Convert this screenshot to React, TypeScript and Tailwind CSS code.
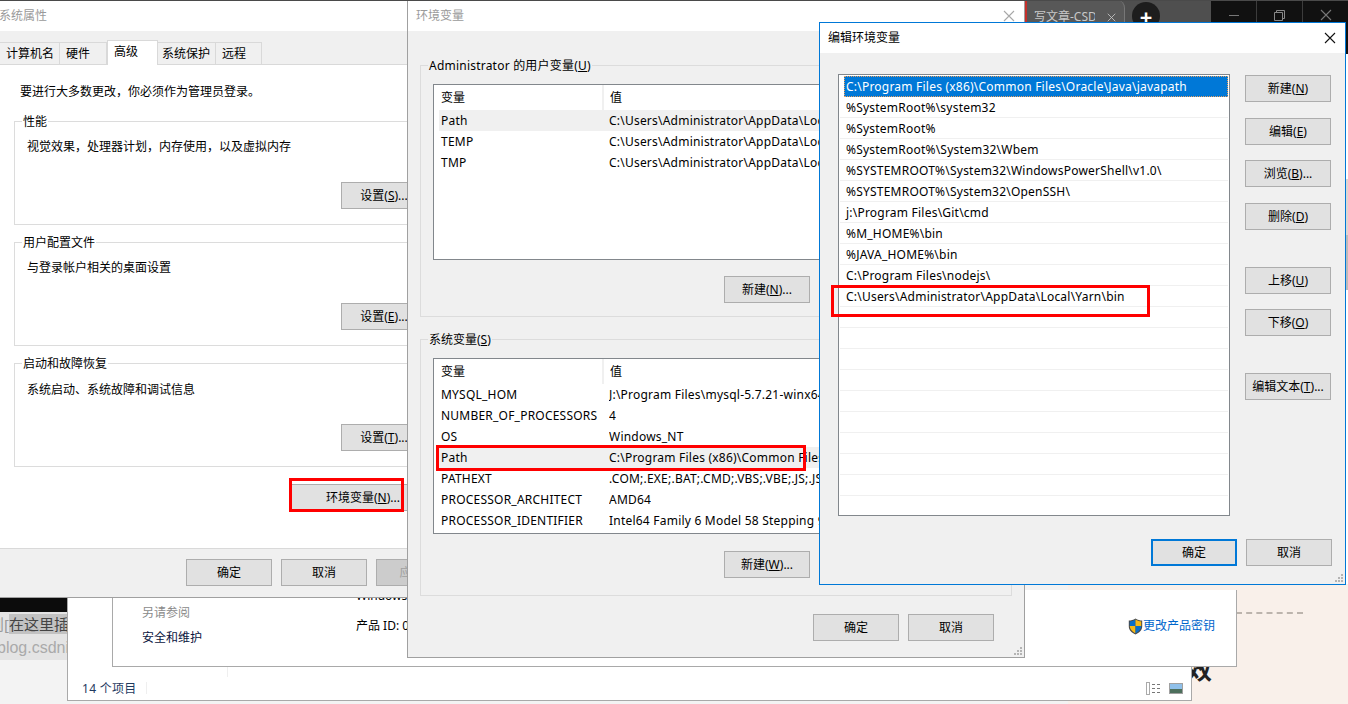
import type { ReactNode } from "react";

const FONT = "font-['Noto_Sans','Noto_Sans_CJK_SC',sans-serif] text-[12px] leading-[18px] text-black";

const USER_VARS = [
  { k: "Path", v: "C:\\Users\\Administrator\\AppData\\Local\\Microsoft\\WindowsApps", sel: true },
  { k: "TEMP", v: "C:\\Users\\Administrator\\AppData\\Local\\Temp" },
  { k: "TMP", v: "C:\\Users\\Administrator\\AppData\\Local\\Temp" },
];

const SYS_VARS = [
  { k: "MYSQL_HOM", v: "J:\\Program Files\\mysql-5.7.21-winx64" },
  { k: "NUMBER_OF_PROCESSORS", v: "4" },
  { k: "OS", v: "Windows_NT" },
  { k: "Path", v: "C:\\Program Files (x86)\\Common Files\\Oracle\\Java", sel: true },
  { k: "PATHEXT", v: ".COM;.EXE;.BAT;.CMD;.VBS;.VBE;.JS;.JSE" },
  { k: "PROCESSOR_ARCHITECT", v: "AMD64" },
  { k: "PROCESSOR_IDENTIFIER", v: "Intel64 Family 6 Model 58 Stepping 9" },
];

const PATHS = [
  "C:\\Program Files (x86)\\Common Files\\Oracle\\Java\\javapath",
  "%SystemRoot%\\system32",
  "%SystemRoot%",
  "%SystemRoot%\\System32\\Wbem",
  "%SYSTEMROOT%\\System32\\WindowsPowerShell\\v1.0\\",
  "%SYSTEMROOT%\\System32\\OpenSSH\\",
  "j:\\Program Files\\Git\\cmd",
  "%M_HOME%\\bin",
  "%JAVA_HOME%\\bin",
  "C:\\Program Files\\nodejs\\",
  "C:\\Users\\Administrator\\AppData\\Local\\Yarn\\bin",
  "", "", "", "", "", "", "", "", "",
];

function Btn({ text, hot, dots, className = "" }: { text: string; hot?: string; dots?: boolean; className?: string }) {
  return (
    <div className={`flex h-[27px] shrink-0 items-center justify-center border border-[#adadad] bg-[#e1e1e1] ${className || "w-[86px]"}`}>
      <span className="whitespace-nowrap">
        {text}
        {hot && (
          <>
            (<u>{hot}</u>)
          </>
        )}
        {dots && "..."}
      </span>
    </div>
  );
}

function Group({ label, bg, className, children }: { label: ReactNode; bg: string; className: string; children: ReactNode }) {
  return (
    <div className={`relative shrink-0 border border-[#dcdcdc] ${className}`}>
      <span className={`absolute -top-[9px] left-[7px] whitespace-nowrap ${bg}`}>{label}</span>
      {children}
    </div>
  );
}

function EnvList({ rows }: { rows: { k: string; v: string; sel?: boolean }[] }) {
  return (
    <div className="ml-[12px] mt-[18px] h-[176px] w-[570px] overflow-hidden border border-[#82878c] bg-white">
      <div className="flex h-[25px] items-center">
        <div className="w-[168px] pl-[7px]">变量</div>
        <div className="h-full w-[2px] bg-[#f0f0f0]" />
        <div className="pl-[6px]">值</div>
      </div>
      {rows.map((r) => (
        <div key={r.k} className={`ml-[5px] flex h-[21px] items-center tracking-[0.22px] ${r.sel ? "bg-[#f0f0f0]" : ""}`}>
          <div className="w-[170px] overflow-hidden whitespace-nowrap pl-[2px]">{r.k}</div>
          <div className="overflow-hidden whitespace-nowrap">{r.v}</div>
        </div>
      ))}
    </div>
  );
}

function Grip({ className }: { className: string }) {
  return (
    <svg className={`absolute ${className}`} width="9" height="9" viewBox="0 0 9 9" fill="#b4b4b4">
      <rect x="6" y="0" width="2" height="2" />
      <rect x="3" y="3" width="2" height="2" />
      <rect x="6" y="3" width="2" height="2" />
      <rect x="0" y="6" width="2" height="2" />
      <rect x="3" y="6" width="2" height="2" />
      <rect x="6" y="6" width="2" height="2" />
    </svg>
  );
}

function CloseX({ color, size = 12 }: { color: string; size?: number }) {
  return (
    <svg width={size} height={size} viewBox="0 0 12 12" fill="none" stroke={color} strokeWidth="1.1">
      <path d="M1 1l10 10M11 1L1 11" />
    </svg>
  );
}

function Shield() {
  return (
    <svg width="15" height="17" viewBox="0 0 15 17" className="shrink-0">
      <path d="M7.5 0.5C5.5 2 3 2.6 0.8 2.6V8.5c0 3.6 3 6.4 6.7 8 3.7-1.6 6.7-4.4 6.7-8V2.6C12 2.6 9.5 2 7.5 0.5z" fill="#4a4a4a" />
      <path d="M7.5 1.6V8H1.8V3.4C3.8 3.3 5.9 2.8 7.5 1.6z" fill="#0a6fc9" />
      <path d="M7.5 1.6C9.1 2.8 11.2 3.3 13.2 3.4V8H7.5z" fill="#f7b917" />
      <path d="M1.8 8h5.7v7.2C4.6 13.8 1.8 11.4 1.8 8z" fill="#f7b917" />
      <path d="M13.2 8H7.5v7.2c2.9-1.4 5.7-3.8 5.7-7.2z" fill="#0a6fc9" />
    </svg>
  );
}

function SystemProps() {
  return (
    <div className="absolute left-0 top-[1px] flex h-[597px] w-[430px] flex-col border-b border-[#a0a0a0] bg-white">
      <div className="flex h-[30px] shrink-0 items-center text-[#9a9a9a]">
        <span className="-ml-[1px]">系统属性</span>
      </div>
      <div className="flex h-[34px] shrink-0 items-end bg-[#f0f0f0]">
        <div className="flex h-[23px] w-[60px] items-center border-r border-b border-t border-[#d9d9d9] pl-[6px] pt-[1px]">计算机名</div>
        <div className="flex h-[23px] w-[47px] items-center border-b border-r border-t border-[#d9d9d9] pl-[6px] pt-[1px]">硬件</div>
        <div className="flex h-[25px] w-[51px] items-center border-x border-t border-[#d9d9d9] bg-white pb-[3px] pl-[6px]">高级</div>
        <div className="flex h-[23px] w-[58px] items-center border-b border-r border-t border-[#d9d9d9] pl-[4px] pt-[1px]">系统保护</div>
        <div className="flex h-[23px] w-[46px] items-center border-b border-r border-t border-[#d9d9d9] pl-[6px] pt-[1px]">远程</div>
        <div className="h-[1px] flex-1 bg-[#d9d9d9]" />
      </div>
      <div className="flex flex-1 flex-col pt-[18px]">
        <div className="ml-[20px]">要进行大多数更改，你必须作为管理员登录。</div>
        <Group label="性能" bg="bg-white px-[1px]" className="ml-[14px] mt-[20px] h-[104px] w-[600px]">
          <div className="pl-[12px] pt-[16px]">视觉效果，处理器计划，内存使用，以及虚拟内存</div>
          <Btn text="设置" hot="S" dots className="ml-[326px] mt-[26px] w-[86px]" />
        </Group>
        <Group label="用户配置文件" bg="bg-white px-[1px]" className="ml-[14px] mt-[17px] h-[104px] w-[600px]">
          <div className="pl-[12px] pt-[16px]">与登录帐户相关的桌面设置</div>
          <Btn text="设置" hot="E" dots className="ml-[326px] mt-[26px] w-[86px]" />
        </Group>
        <Group label="启动和故障恢复" bg="bg-white px-[1px]" className="ml-[14px] mt-[17px] h-[104px] w-[600px]">
          <div className="pl-[12px] pt-[17px]">系统启动、系统故障和调试信息</div>
          <Btn text="设置" hot="T" dots className="ml-[326px] mt-[25px] w-[86px]" />
        </Group>
        <Btn text="环境变量" hot="N" dots className="ml-[291px] mt-[17px] w-[144px]" />
      </div>
      <div className="flex h-[49px] shrink-0 gap-[9px] border-t border-[#d9d9d9] bg-[#f0f0f0] pl-[186px] pt-[10px]">
        <Btn text="确定" />
        <Btn text="取消" />
        <Btn text="应用" hot="A" className="w-[86px] !bg-[#cccccc] text-[#a0a0a0]" />
      </div>
    </div>
  );
}

function EnvVars() {
  return (
    <div className="absolute left-[407px] top-[1px] flex h-[657px] w-[618px] flex-col border-x border-b border-[#a0a0a0] bg-[#f0f0f0]">
      <div className="flex h-[30px] shrink-0 items-center justify-between bg-white pl-[8px] pr-[9px] text-[#9a9a9a]">
        <span>环境变量</span>
        <CloseX color="#a8a8a8" />
      </div>
      <div className="flex flex-col pl-[12px] pt-[34px]">
        <Group
          label={
            <>
              Administrator 的用户变量(<u>U</u>)
            </>
          }
          bg="bg-[#f0f0f0] px-[1px] tracking-[0.22px]"
          className="h-[252px] w-[592px]"
        >
          <EnvList rows={USER_VARS} />
          <Btn text="新建" hot="N" dots className="ml-[303px] mt-[16px] w-[86px]" />
        </Group>
        <Group
          label={
            <>
              系统变量(<u>S</u>)
            </>
          }
          bg="bg-[#f0f0f0] px-[1px]"
          className="mt-[22px] h-[257px] w-[592px]"
        >
          <EnvList rows={SYS_VARS} />
          <Btn text="新建" hot="W" dots className="ml-[303px] mt-[17px] w-[86px]" />
        </Group>
        <div className="ml-[393px] mt-[18px] flex gap-[9px]">
          <Btn text="确定" />
          <Btn text="取消" />
        </div>
      </div>
      <Grip className="bottom-[1px] right-[1px]" />
    </div>
  );
}

function EditDialog() {
  const buttons = [
    { text: "新建", hot: "N", mt: "mt-0" },
    { text: "编辑", hot: "E", mt: "mt-[16px]" },
    { text: "浏览", hot: "B", dots: true, mt: "mt-[15px]" },
    { text: "删除", hot: "D", mt: "mt-[16px]" },
    { text: "上移", hot: "U", mt: "mt-[37px]" },
    { text: "下移", hot: "O", mt: "mt-[15px]" },
    { text: "编辑文本", hot: "T", dots: true, mt: "mt-[37px]" },
  ];
  return (
    <div className="absolute left-[819px] top-[22px] flex h-[563px] w-[527px] flex-col border border-[#0078d7] bg-[#f0f0f0]">
      <div className="flex h-[30px] shrink-0 items-center justify-between bg-white pl-[8px] pr-[9px]">
        <span>编辑环境变量</span>
        <CloseX color="#111111" />
      </div>
      <div className="flex pl-[18px] pt-[21px]">
        <div className="h-[442px] w-[392px] border border-[#82878c] bg-white pt-[1px]">
          {PATHS.map((p, i) => (
            <div
              key={i}
              className={`ml-[1px] flex h-[21px] w-[388px] items-center border-b border-[#f0f0f0] pl-[6px] pt-[1px] tracking-[0.22px] first:ml-[5px] first:w-[384px] first:border-b-0 first:bg-[#0078d7] first:pl-[2px] first:pt-0 first:text-white first:outline-1 first:-outline-offset-1 first:outline-dotted first:outline-[#e8a060]`}
            >
              {p}
            </div>
          ))}
        </div>
        <div className="ml-[15px] flex flex-col pt-[1px]">
          {buttons.map((b) => (
            <Btn key={b.text} text={b.text} hot={b.hot} dots={b.dots} className={`w-[86px] ${b.mt}`} />
          ))}
        </div>
      </div>
      <div className="mt-[23px] flex justify-end gap-[9px] pr-[13px]">
        <Btn text="确定" className="w-[86px] !border-2 !border-[#0078d7]" />
        <Btn text="取消" />
      </div>
      <Grip className="bottom-[1px] right-[1px]" />
    </div>
  );
}

function BrowserChrome() {
  return (
    <div className="absolute left-[1025px] top-0 flex h-[54px] w-[323px] overflow-hidden bg-[#4f4f4f]">
      <div className="flex h-full w-[100px] items-start justify-between rounded-tr-[8px] border-l-2 border-r border-[#c4302b] border-r-[#777777] bg-[#585858] pl-[7px] pr-[8px] pt-[8px] text-[#c8c8c8]">
        <span className="w-[61px] overflow-hidden whitespace-nowrap">写文章-CSDN</span>
        <div className="pt-[5px]">
          <CloseX color="#c8c8c8" size={9} />
        </div>
      </div>
      <div className="ml-[7px] mt-[2px] flex h-[28px] w-[28px] items-center justify-center rounded-full bg-[#1d1d1d] text-[22px] font-bold leading-[28px] text-white">
        +
      </div>
      <div className="ml-auto flex h-full w-[137px] bg-[#111111]">
        <div className="flex h-[30px] w-[45px] items-center justify-center">
          <div className="h-px w-[10px] bg-[#777777]" />
        </div>
        <div className="flex h-[30px] w-[46px] items-center justify-center border-l border-[#3c3c3c]">
          <svg width="11" height="11" viewBox="0 0 11 11" fill="none" stroke="#888888">
            <path d="M0.5 2.5h8v8h-8zM2.5 2.5v-2h8v8h-2" />
          </svg>
        </div>
        <div className="flex h-[30px] w-[46px] items-center justify-center border-l border-[#3c3c3c]">
          <CloseX color="#777777" />
        </div>
      </div>
    </div>
  );
}

export default function App() {
  return (
    <div className={`relative h-[704px] w-[1348px] overflow-hidden bg-[#f3f3f3] ${FONT}`}>
      {/* page behind the windows */}
      <div className="absolute bottom-0 left-[1068px] right-0 top-[584px] bg-[#f9f0ea]" />
      <div className="absolute left-[1345px] top-[54px] flex h-[530px] w-[3px] flex-col bg-white pt-[125px]">
        <div className="h-[56px] bg-[#ddd7d2]" />
        <div className="h-[55px] bg-[#bbbbbb]" />
      </div>
      <div className="absolute left-[1236px] top-[612px] w-[67px] border-t-2 border-dashed border-[#bcb4ad]" />
      <span className="absolute left-[1186px] top-[654px] text-[26px] font-bold leading-[30px] text-[#222222]">效</span>
      <div className="absolute left-0 top-[597px] h-[15px] w-[70px] bg-[#0c0c0c]" />
      <div className="absolute left-0 top-[612px] flex h-[48px] w-[70px] flex-col overflow-hidden whitespace-nowrap bg-[#e4e4e4] text-[15px] leading-[24px]">
        <div className="-ml-[11px] text-[#444444]">
          <span className="text-[#999999]">则[</span>
          <span className="bg-[#c2c2c2]">在这里插入</span>
        </div>
        <div className="-ml-[3px] font-['Liberation_Sans',sans-serif] text-[16px] text-[#aaaaaa]">blog.csdnimg</div>
      </div>

      {/* explorer windows under the dialogs */}
      <div className="absolute left-[67px] top-[590px] flex h-[111px] w-[1125px] items-end justify-between border-x border-b border-[#a9a9a9] bg-white pb-[2px] pl-[14px] pr-[8px]">
        <span className="tracking-[0.3px] text-[#1f3a5f]">14 个项目</span>
        <div className="flex items-center gap-[8px] pb-[3px]">
          <svg width="15" height="13" viewBox="0 0 15 13" fill="none" stroke="#777777">
            <rect x="0.5" y="0.5" width="3" height="12" stroke="#aaaaaa" />
            <path d="M6 2.5h3M11 2.5h3M6 6.5h3M11 6.5h3M6 10.5h3M11 10.5h3" />
          </svg>
          <svg width="14" height="11" viewBox="0 0 14 11">
            <rect x="0.5" y="0.5" width="13" height="10" fill="#8fc0ea" stroke="#a0a0a0" />
            <rect x="1" y="6" width="12" height="4" fill="#4d6f5c" />
          </svg>
        </div>
      </div>
      <div className="absolute left-[146px] top-[682px] h-[12px] w-px bg-[#efefef]" />
      <div className="absolute left-[227px] top-[667px] h-[10px] w-px bg-[#efefef]" />
      <div className="absolute left-[112px] top-[590px] h-[77px] w-[1125px] border-x border-b border-[#a9a9a9] bg-white">
        <div className="relative h-full">
          <div className="absolute left-[29px] top-[14px] text-[#8a8a8a]">另请参阅</div>
          <div className="absolute left-[29px] top-[39px] text-[#0a1440]">安全和维护</div>
          <div className="absolute left-[243px] top-[-3px]">Windows</div>
          <div className="absolute left-[243px] top-[27px]">产品 ID: 00000</div>
          <div className="absolute left-[1015px] top-[27px] flex items-center text-[#0066cc]">
            <Shield />
            更改产品密钥
          </div>
        </div>
      </div>

      <BrowserChrome />
      <div className="absolute left-0 right-0 top-0 h-px bg-[#4a4a4a]" />
      <SystemProps />
      <EnvVars />
      <EditDialog />

      {/* red annotations */}
      <div className="absolute left-[289px] top-[478px] h-[34px] w-[115px] border-[3px] border-[#ff0000]" />
      <div className="absolute left-[436px] top-[445px] h-[26px] w-[370px] border-[3px] border-[#ff0000]" />
      <div className="absolute left-[831px] top-[285px] h-[32px] w-[319px] border-[3px] border-[#ff0000]" />
    </div>
  );
}
